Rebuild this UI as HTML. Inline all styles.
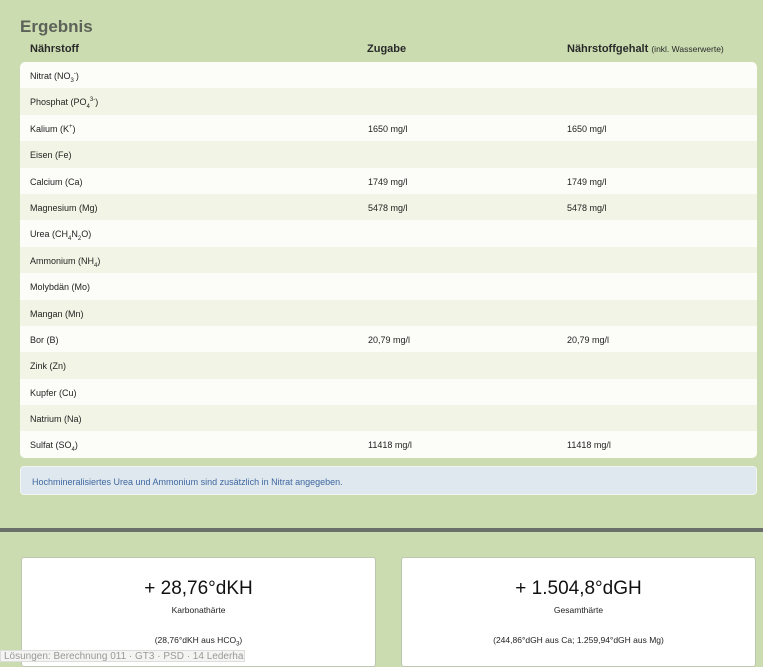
<!DOCTYPE html>
<html><head><meta charset="utf-8"><style>
*{margin:0;padding:0;box-sizing:border-box}
body{width:763px;height:659px;overflow:hidden;background:#cbdcb0;font-family:"Liberation Sans",sans-serif;position:relative;color:#222}
h1{position:absolute;left:20px;top:17px;font-size:17px;font-weight:bold;color:#5c6258}
.hd{position:absolute;top:43px;font-size:11px;font-weight:bold;color:#2a2a2a}
.hd small{font-size:8.5px;font-weight:normal}
.tbl{position:absolute;left:20px;top:62px;width:737px;height:396px;border-radius:5px;overflow:hidden;background:#fcfdf9}
.r{height:26.4px;position:relative;font-size:9px;color:#222}
.r:nth-child(even){background:#f2f5e6}
.r span{position:absolute;top:9px}
.c1{left:10px}.c2{left:348px}.c3{left:547px}
sub,sup{font-size:6px}
.note{position:absolute;left:20px;top:466px;width:737px;height:29px;background:#dfe8ee;border:1px solid #f2f5f2;border-radius:4px;font-size:9px;color:#3f67a0;padding:10px 11px}
.bar{position:absolute;left:0;top:528px;width:763px;height:4px;background:#6c706a}
.card{position:absolute;top:557px;width:355px;height:110px;background:#fff;border:1px solid #bcc7b0;border-radius:3px;text-align:center}
.big{font-size:19px;margin-top:20px;color:#111}
.lbl{font-size:8.5px;margin-top:5px}
.sm{font-size:8.5px;margin-top:20px}
.tip{position:absolute;left:0;top:650px;width:245px;height:12px;background:#f4f4f2;border:1px solid #ddd;color:#999;font-size:10px;padding-left:3px;white-space:nowrap;overflow:hidden}
</style></head><body>
<h1>Ergebnis</h1>
<div class="hd" style="left:30px">Nährstoff</div>
<div class="hd" style="left:367px">Zugabe</div>
<div class="hd" style="left:567px">Nährstoffgehalt <small>(inkl. Wasserwerte)</small></div>
<div class="tbl">
<div class="r"><span class="c1">Nitrat (NO<sub>3</sub><sup>-</sup>)</span></div>
<div class="r"><span class="c1">Phosphat (PO<sub>4</sub><sup>3-</sup>)</span></div>
<div class="r"><span class="c1">Kalium (K<sup>+</sup>)</span><span class="c2">1650 mg/l</span><span class="c3">1650 mg/l</span></div>
<div class="r"><span class="c1">Eisen (Fe)</span></div>
<div class="r"><span class="c1">Calcium (Ca)</span><span class="c2">1749 mg/l</span><span class="c3">1749 mg/l</span></div>
<div class="r"><span class="c1">Magnesium (Mg)</span><span class="c2">5478 mg/l</span><span class="c3">5478 mg/l</span></div>
<div class="r"><span class="c1">Urea (CH<sub>4</sub>N<sub>2</sub>O)</span></div>
<div class="r"><span class="c1">Ammonium (NH<sub>4</sub>)</span></div>
<div class="r"><span class="c1">Molybdän (Mo)</span></div>
<div class="r"><span class="c1">Mangan (Mn)</span></div>
<div class="r"><span class="c1">Bor (B)</span><span class="c2">20,79 mg/l</span><span class="c3">20,79 mg/l</span></div>
<div class="r"><span class="c1">Zink (Zn)</span></div>
<div class="r"><span class="c1">Kupfer (Cu)</span></div>
<div class="r"><span class="c1">Natrium (Na)</span></div>
<div class="r"><span class="c1">Sulfat (SO<sub>4</sub>)</span><span class="c2">11418 mg/l</span><span class="c3">11418 mg/l</span></div>
</div>
<div class="note">Hochmineralisiertes Urea und Ammonium sind zusätzlich in Nitrat angegeben.</div>
<div class="bar"></div>
<div class="card" style="left:21px"><div class="big">+ 28,76°dKH</div><div class="lbl">Karbonathärte</div><div class="sm">(28,76°dKH aus HCO<sub>3</sub>)</div></div>
<div class="card" style="left:401px"><div class="big">+ 1.504,8°dGH</div><div class="lbl">Gesamthärte</div><div class="sm">(244,86°dGH aus Ca; 1.259,94°dGH aus Mg)</div></div>
<div class="tip">Lösungen: Berechnung 011 · GT3 · PSD · 14 Lederhandel</div>
</body></html>
